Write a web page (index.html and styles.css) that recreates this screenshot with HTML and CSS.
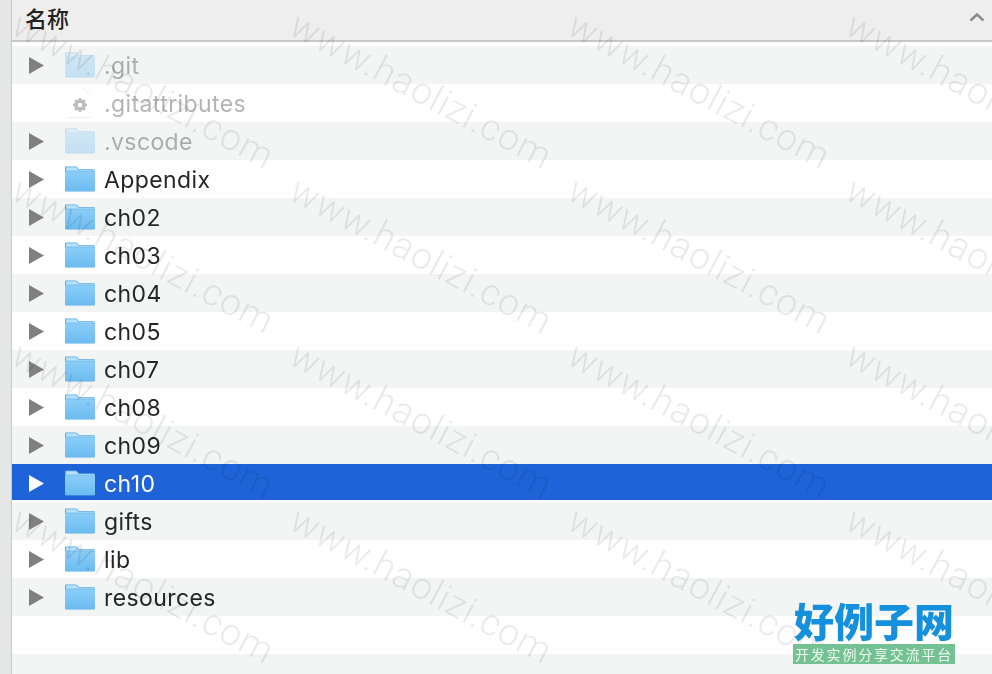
FILE: index.html
```html
<!DOCTYPE html>
<html lang="zh-CN">
<head>
  <meta charset="UTF-8" />
  <meta name="viewport" content="width=device-width, initial-scale=1.0"/>
  <title>名称</title>
  <link rel="stylesheet" href="styles.css">
</head>
<body>

  <svg class="defs" width="0" height="0">
    <linearGradient id="folder-body" x1="0" y1="0" x2="0" y2="1">
      <stop offset="0" stop-color="#8bcdf8"/>
      <stop offset="1" stop-color="#6dbcf1"/>
    </linearGradient>
    <symbol id="folder" viewBox="0 0 30 26">
      <path d="M1.500 0.500h9c1 0 1.500 .4 2.200 1.200l1.300 1.500h14.500c.9 0 1.500 .6 1.500 1.500v19c0 1-.6 1.800-1.500 1.800h-27c-.9 0-1.500-.8-1.500-1.800v-22.200c0-.6 .4-1 1.500-1z" fill="#5aa9e0"/>
      <path d="M1.500 1.200h8.800c.9 0 1.300 .4 1.900 1.100l1.500 1.700h14.800c.7 0 1.500 .3 1.500 1v-.2h-29v-2.600c0-.6 .2-1 .5-1z" fill="#b5e0fb"/>
      <path d="M0 5.200h30v18.300c0 1-.6 1.500-1.500 1.500h-27c-.9 0-1.500-.5-1.500-1.500z" fill="url(#folder-body)"/>
    </symbol>
    <symbol id="arrow" viewBox="0 0 15 17">
      <path d="M0 0l15 8.500-15 8.500z"/>
    </symbol>
  </svg>

  <div class="finder">
    <div class="side"></div>
    <div class="pane">
      <div class="head">
        <span>名称</span>
        <svg class="chevron" width="16" height="10" viewBox="0 0 16 10"><path d="M1.500 8.500l6.500-6 6.500 6" fill="none" stroke="#8b8b8b" stroke-width="2.400"/></svg>
      </div>
      <div class="list">
        <div class="row dim">
          <svg class="arrow"><use href="#arrow"/></svg>
          <svg class="icon"><use href="#folder"/></svg>
          <span class="name">.git</span>
        </div>
        <div class="row dim">
          <span class="arrow"></span>
          <svg class="icon doc" viewBox="0 0 30 32">
            <path d="M3 1h16l7 7v23h-23z" fill="#fff"/>
            <path d="M3 30.500h23M18 1l8 7" stroke="#cfcfcf" fill="none"/>
            <circle cx="15" cy="18" r="4" fill="none" stroke="#38464f" stroke-width="3.600"/>
            <path d="M15 11v3M15 22v3M8 18h3M19 18h3M10 13l2 2M18 21l2 2M10 23l2-2M18 15l2-2" stroke="#38464f" stroke-width="2.400"/>
          </svg>
          <span class="name">.gitattributes</span>
        </div>
        <div class="row dim">
          <svg class="arrow"><use href="#arrow"/></svg>
          <svg class="icon"><use href="#folder"/></svg>
          <span class="name">.vscode</span>
        </div>
        <div class="row">
          <svg class="arrow"><use href="#arrow"/></svg>
          <svg class="icon"><use href="#folder"/></svg>
          <span class="name">Appendix</span>
        </div>
        <div class="row">
          <svg class="arrow"><use href="#arrow"/></svg>
          <svg class="icon"><use href="#folder"/></svg>
          <span class="name">ch02</span>
        </div>
        <div class="row">
          <svg class="arrow"><use href="#arrow"/></svg>
          <svg class="icon"><use href="#folder"/></svg>
          <span class="name">ch03</span>
        </div>
        <div class="row">
          <svg class="arrow"><use href="#arrow"/></svg>
          <svg class="icon"><use href="#folder"/></svg>
          <span class="name">ch04</span>
        </div>
        <div class="row">
          <svg class="arrow"><use href="#arrow"/></svg>
          <svg class="icon"><use href="#folder"/></svg>
          <span class="name">ch05</span>
        </div>
        <div class="row">
          <svg class="arrow"><use href="#arrow"/></svg>
          <svg class="icon"><use href="#folder"/></svg>
          <span class="name">ch07</span>
        </div>
        <div class="row">
          <svg class="arrow"><use href="#arrow"/></svg>
          <svg class="icon"><use href="#folder"/></svg>
          <span class="name">ch08</span>
        </div>
        <div class="row">
          <svg class="arrow"><use href="#arrow"/></svg>
          <svg class="icon"><use href="#folder"/></svg>
          <span class="name">ch09</span>
        </div>
        <div class="row selected">
          <svg class="arrow"><use href="#arrow"/></svg>
          <svg class="icon"><use href="#folder"/></svg>
          <span class="name">ch10</span>
        </div>
        <div class="row">
          <svg class="arrow"><use href="#arrow"/></svg>
          <svg class="icon"><use href="#folder"/></svg>
          <span class="name">gifts</span>
        </div>
        <div class="row">
          <svg class="arrow"><use href="#arrow"/></svg>
          <svg class="icon"><use href="#folder"/></svg>
          <span class="name">lib</span>
        </div>
        <div class="row">
          <svg class="arrow"><use href="#arrow"/></svg>
          <svg class="icon"><use href="#folder"/></svg>
          <span class="name">resources</span>
        </div>
        <div class="row"></div>
        <div class="row"></div>
      </div>
    </div>
  </div>

  <div class="watermark">
    <span>www.haolizi.com</span><span>www.haolizi.com</span><span>www.haolizi.com</span><span>www.haolizi.com</span>
    <span>www.haolizi.com</span><span>www.haolizi.com</span><span>www.haolizi.com</span><span>www.haolizi.com</span>
    <span>www.haolizi.com</span><span>www.haolizi.com</span><span>www.haolizi.com</span><span>www.haolizi.com</span>
    <span>www.haolizi.com</span><span>www.haolizi.com</span><span>www.haolizi.com</span><span>www.haolizi.com</span>
  </div>

  <div class="logo">
    <div class="logo-title">好例子网</div>
    <div class="logo-sub">开发实例分享交流平台</div>
  </div>

</body>
</html>
```

FILE: styles.css
```css
* {
  box-sizing: border-box;
  margin: 0;
  padding: 0;
}

html, body {
  height: 100%;
  overflow: hidden;
}

body {
  position: relative;
  background-color: white;
  color: #262626;
  font-family: Inter, "Noto Sans CJK SC", sans-serif;
}

.defs {
  position: absolute;
}

.finder {
  display: flex;
  height: 100%;
  filter: blur(0.3px);
}

.side {
  flex: 0 0 12px;
  background-color: #e5e7e7;
  border-right: 1px solid #c9c9c9;
}

.pane {
  flex: 1;
  min-width: 0;
}

.head {
  height: 42px;
  display: flex;
  align-items: center;
  justify-content: space-between;
  padding: 0 7px 6px 13px;
  background-color: #eeeeee;
  border-bottom: 2px solid #c6c6c6;
  font-family: "Noto Sans CJK SC", sans-serif;
  font-size: 22px;
  font-weight: 500;
  color: #222;
}

.list {
  padding-top: 4px;
}

.row {
  height: 38px;
  display: flex;
  align-items: center;
  padding-left: 17px;
}

.row:nth-child(odd) {
  background-color: #f3f5f4;
}

.arrow {
  flex: 0 0 15px;
  width: 15px;
  height: 17px;
  margin-right: 21px;
  fill: #808080;
}

.icon {
  flex: 0 0 30px;
  width: 30px;
  height: 26px;
  margin-right: 9px;
}

.icon.doc {
  height: 32px;
}

.name {
  padding-top: 2px;
  font-size: 23px;
  line-height: 36px;
  letter-spacing: 0.4px;
}

.dim .name,
.dim .icon {
  opacity: 0.35;
}

.row.selected {
  background: linear-gradient(#1f63d8 36px, white 36px);
  color: white;
}

.selected .arrow {
  fill: white;
}

.watermark {
  position: absolute;
  inset: 0;
  padding: 8px 0 0 4px;
  display: grid;
  grid-template-columns: repeat(4, 278px);
  grid-template-rows: repeat(4, 165px);
  pointer-events: none;
  filter: blur(0.3px);
}

.watermark span {
  place-self: center;
  white-space: nowrap;
  font-family: Roboto, sans-serif;
  font-weight: 300;
  font-size: 37px;
  letter-spacing: 1px;
  color: rgba(0, 0, 0, 0.085);
  transform: rotate(28deg);
}

.logo {
  position: absolute;
  left: 793px;
  top: 598px;
  width: 162px;
}

.logo-title {
  margin-bottom: 2px;
  font-family: "Noto Sans CJK SC", sans-serif;
  font-weight: 900;
  font-size: 40px;
  line-height: 44px;
  white-space: nowrap;
  color: #1590dd;
  text-align: center;
}

.logo-sub {
  height: 20px;
  background-color: #74c293;
  color: #eef8f1;
  font-family: "Noto Sans CJK SC", sans-serif;
  font-size: 14px;
  line-height: 20px;
  letter-spacing: 1.800px;
  text-align: center;
  white-space: nowrap;
}
```
